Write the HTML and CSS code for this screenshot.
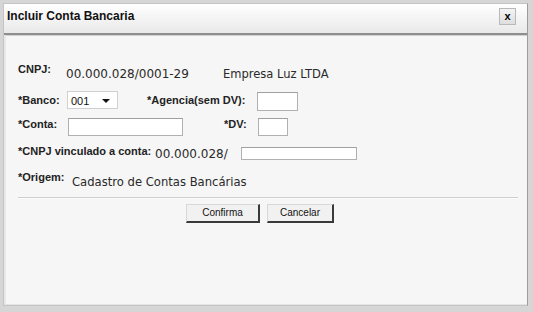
FILE: index.html
```html
<!DOCTYPE html>
<html lang="pt">
<head>
<meta charset="utf-8">
<title>Incluir Conta Bancaria</title>
<link rel="stylesheet" href="styles.css">
</head>
<body>
<div class="window">
  <div class="titlebar">
    <span class="title">Incluir Conta Bancaria</span>
    <span class="close">x</span>
  </div>
  <div class="content">
    <div class="row r1">
      <span class="lbl w-cnpj">CNPJ:</span>
      <span class="val v-cnpj">00.000.028/0001-29</span>
      <span class="val v-name">Empresa Luz LTDA</span>
    </div>
    <div class="row r2">
      <span class="lbl w-banco">*Banco:</span>
      <span class="select"><span class="sel-text">001</span><span class="arrow"></span></span>
      <span class="lbl w-agencia">*Agencia(sem DV):</span>
      <span class="input in-agencia"></span>
    </div>
    <div class="row r3">
      <span class="lbl w-conta">*Conta:</span>
      <span class="input in-conta"></span>
      <span class="lbl w-dv">*DV:</span>
      <span class="input in-dv"></span>
    </div>
    <div class="row r4">
      <span class="lbl w-vinc">*CNPJ vinculado a conta:</span>
      <span class="val v-vinc">00.000.028/</span>
      <span class="input in-vinc"></span>
    </div>
    <div class="row r5">
      <span class="lbl w-origem">*Origem:</span>
      <span class="val v-origem">Cadastro de Contas Bancárias</span>
    </div>
    <div class="separator"></div>
    <div class="buttons">
      <button class="btn btn-confirma">Confirma</button>
      <button class="btn btn-cancelar">Cancelar</button>
    </div>
  </div>
</div>
</body>
</html>
```

FILE: styles.css
```css
html, body {
  margin: 0;
  padding: 0;
}
body {
  width: 533px;
  height: 312px;
  background: #d6d6d6;
  overflow: hidden;
  font-family: "Liberation Sans", Arial, sans-serif;
}
.window {
  box-sizing: border-box;
  margin: 3px 0 0 3px;
  width: 525px;
  height: 303px;
  background: #f6f6f6;
  border: 1px solid #c4c4c4;
  border-right-color: #9c9c9c;
  display: flex;
  flex-direction: column;
}
.titlebar {
  height: 29px;
  flex: none;
  display: flex;
  justify-content: space-between;
  align-items: flex-start;
  background: linear-gradient(#ffffff, #e9e9e9);
  border-bottom: 2px solid #8e8e8e;
  box-shadow: 0 1px 0 #d0d0d0;
}
.title {
  padding: 5px 0 0 3px;
  font-weight: 700;
  font-size: 12px;
  line-height: 14px;
  color: #111;
}
.close {
  box-sizing: border-box;
  margin: 4px 11px 0 0;
  width: 17px;
  height: 17px;
  border: 1px solid #b9b9b9;
  background: linear-gradient(#f4f4f4, #dedede);
  font-weight: 700;
  font-size: 11px;
  line-height: 14px;
  text-align: center;
  color: #000;
}
.content {
  flex: 1;
  padding: 29px 9px 0 12px;
  border-left: 2px solid #e8e8e8;
  border-bottom: 1px solid #e4e4e4;
}
.row {
  display: flex;
  align-items: flex-start;
}
.r1 { height: 27px; }
.r2 { height: 27px; }
.r3 { height: 27px; }
.r4 { height: 26px; }
.r5 { height: 26px; }
.lbl {
  flex: none;
  font-weight: 700;
  font-size: 11px;
  line-height: 13px;
  color: #222;
  white-space: nowrap;
}
.val {
  flex: none;
  font-family: "DejaVu Sans", Verdana, sans-serif;
  font-size: 11.6px;
  line-height: 14px;
  color: #2a2a2a;
  white-space: nowrap;
}
.w-cnpj { width: 48px; margin-top: -1px; }
.v-cnpj { width: 157px; margin-top: 3px; font-size: 12px; }
.v-name { margin-top: 3px; font-size: 11.5px; }
.w-banco { width: 49px; margin-top: 3px; }
.select {
  box-sizing: border-box;
  flex: none;
  margin-top: 0;
  width: 51px;
  height: 18px;
  background: #fff;
  border: 1px solid #d0d0d0;
  display: flex;
  align-items: center;
  justify-content: space-between;
  padding: 0 7px 0 3px;
}
.sel-text {
  font-size: 11px;
  color: #111;
  padding-top: 1px;
}
.arrow {
  width: 0;
  height: 0;
  border-left: 4px solid transparent;
  border-right: 4px solid transparent;
  border-top: 4px solid #111;
  margin-top: 2px;
}
.w-agencia { width: 110px; margin-left: 29px; margin-top: 3px; }
.input {
  box-sizing: border-box;
  flex: none;
  background: #fff;
  border: 1px solid #b0b0b0;
  border-top-color: #a0a0a0;
}
.in-agencia { width: 41px; height: 19px; margin-top: 1px; }
.w-conta { width: 50px; margin-top: 0; }
.in-conta { width: 115px; height: 18px; margin-top: 0; }
.w-dv { width: 34px; margin-left: 41px; margin-top: 0; }
.in-dv { width: 30px; height: 18px; margin-top: 0; }
.w-vinc { width: 137px; margin-top: 0; }
.v-vinc { width: 86px; margin-top: 2px; font-size: 12px; }
.in-vinc { width: 116px; height: 13px; margin-top: 2px; }
.w-origem { width: 54px; margin-top: 0; }
.v-origem { margin-top: 4px; }
.separator {
  height: 1px;
  background: #cfcfcf;
  border-bottom: 1px solid #fbfbfb;
}
.buttons {
  display: flex;
  gap: 7px;
  padding: 5px 0 0 168px;
}
.btn {
  box-sizing: border-box;
  height: 19px;
  margin: 0;
  padding: 0;
  font-family: "Liberation Sans", Arial, sans-serif;
  font-size: 10px;
  color: #111;
  background: #f1f1f1;
  border: 1px solid #d8d8d8;
  border-right: 2px solid #3a3a3a;
  border-bottom: 2px solid #3a3a3a;
  line-height: 14px;
}
.btn-confirma { width: 74px; }
.btn-cancelar { width: 67px; }
```
